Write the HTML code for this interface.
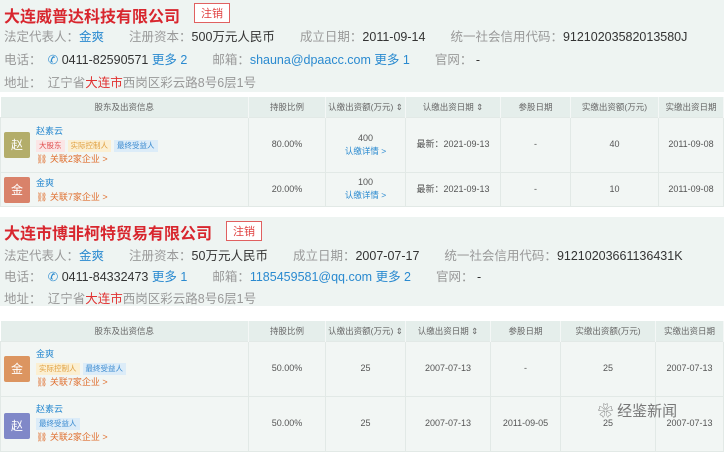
<!DOCTYPE html>
<html><head><meta charset="utf-8"><style>
*{margin:0;padding:0;box-sizing:border-box}
body{width:724px;height:444px;overflow:hidden;background:#fff;font-family:"Liberation Sans","Noto Sans CJK SC",sans-serif;position:relative;color:#444}
.a{position:absolute;white-space:nowrap}
.sec{position:absolute;left:0;width:724px;background:#eef4f2}
.t{font-size:16px;font-weight:bold;color:#d8262e}
.tag{border:1px solid #e06060;color:#e04040;font-size:11px;padding:1px 6px;background:#fff}
.l{font-size:12.5px;color:#999}
.v{color:#333}
.b{color:#2a8ad0}
.r{color:#e03030}
table{position:absolute;left:0;width:724px;border-collapse:collapse;font-size:9px;color:#555;table-layout:fixed}
th{background:#e5eeeb;font-weight:normal;color:#666;height:20px;border-right:1px solid #f4f7f6;white-space:nowrap;overflow:hidden;font-size:8.5px;padding:0}
td{background:#f2f6f4;border:1px solid #e2e9e6;text-align:center;position:relative;white-space:nowrap;padding:0;line-height:13px}
.av{position:absolute;left:3px;width:26px;height:26px;color:#fff;font-size:12px;line-height:26px;text-align:center;border-radius:2px}
.info{position:absolute;left:35px;text-align:left;line-height:14px}
.nm{color:#2a8ad0}
.tg{display:inline-block;font-size:7.5px;padding:0 3px;margin-right:3px;line-height:12px}
.rel{color:#e07030}
.sub{color:#2a8ad0;font-size:8.5px}
</style></head><body>
<div class="sec" style="top:0;height:92px"></div>
<div class="a t" style="left:4px;top:3px">大连威普达科技有限公司</div>
<div class="a tag" style="left:194px;top:3px">注销</div>
<div class="a l" style="left:4px;top:26px">法定代表人：<span class="b">金爽</span>　　注册资本：<span class="v">500万元人民币</span>　　成立日期：<span class="v">2011-09-14</span>　　统一社会信用代码：<span class="v">91210203582013580J</span></div>
<div class="a l" style="left:4px;top:49px">电话：　<span class="b">✆ </span><span class="v">0411-82590571</span> <span class="b">更多 2</span>　　邮箱：<span class="b">shauna@dpaacc.com 更多 1</span>　　官网：<span class="v"> -</span></div>
<div class="a l" style="left:4px;top:72px">地址：　辽宁省<span class="r">大连市</span>西岗区彩云路8号6层1号</div>

<table style="top:97px">
<colgroup><col style="width:248px"><col style="width:77px"><col style="width:80px"><col style="width:95px"><col style="width:70px"><col style="width:88px"><col></colgroup>
<tr><th>股东及出资信息</th><th>持股比例</th><th>认缴出资额(万元) ⇕</th><th>认缴出资日期 ⇕</th><th>参股日期</th><th>实缴出资额(万元)</th><th>实缴出资日期</th></tr>
<tr style="height:55px"><td><div class="av" style="top:14px;background:#b3ad6a">赵</div><div class="info" style="top:6px"><div class="nm">赵素云</div><div><span class="tg" style="background:#fbe6e6;color:#e05050">大股东</span><span class="tg" style="background:#fbefd2;color:#e0a040">实际控制人</span><span class="tg" style="background:#dcecf8;color:#3a8ad0">最终受益人</span></div><div class="rel">⛓ 关联2家企业 &gt;</div></div></td><td>80.00%</td><td>400<br><span class="sub">认缴详情 &gt;</span></td><td>最新：2021-09-13</td><td>-</td><td>40</td><td>2011-09-08</td></tr>
<tr style="height:34px"><td><div class="av" style="top:4px;background:#d9826a">金</div><div class="info" style="top:3px"><div class="nm">金爽</div><div class="rel">⛓ 关联7家企业 &gt;</div></div></td><td>20.00%</td><td>100<br><span class="sub">认缴详情 &gt;</span></td><td>最新：2021-09-13</td><td>-</td><td>10</td><td>2011-09-08</td></tr>
</table>

<div class="sec" style="top:217px;height:89px"></div>
<div class="a t" style="left:4px;top:220px">大连市博非柯特贸易有限公司</div>
<div class="a tag" style="left:226px;top:221px">注销</div>
<div class="a l" style="left:4px;top:245px">法定代表人：<span class="b">金爽</span>　　注册资本：<span class="v">50万元人民币</span>　　成立日期：<span class="v">2007-07-17</span>　　统一社会信用代码：<span class="v">91210203661136431K</span></div>
<div class="a l" style="left:4px;top:266px">电话：　<span class="b">✆ </span><span class="v">0411-84332473</span> <span class="b">更多 1</span>　　邮箱：<span class="b">1185459581@qq.com 更多 2</span>　　官网：<span class="v"> -</span></div>
<div class="a l" style="left:4px;top:288px">地址：　辽宁省<span class="r">大连市</span>西岗区彩云路8号6层1号</div>

<table style="top:321px">
<colgroup><col style="width:248px"><col style="width:77px"><col style="width:80px"><col style="width:85px"><col style="width:70px"><col style="width:95px"><col></colgroup>
<tr><th>股东及出资信息</th><th>持股比例</th><th>认缴出资额(万元) ⇕</th><th>认缴出资日期 ⇕</th><th>参股日期</th><th>实缴出资额(万元)</th><th>实缴出资日期</th></tr>
<tr style="height:55px"><td><div class="av" style="top:14px;background:#dc9560">金</div><div class="info" style="top:5px"><div class="nm">金爽</div><div><span class="tg" style="background:#fbefd2;color:#e0a040">实际控制人</span><span class="tg" style="background:#dcecf8;color:#3a8ad0">最终受益人</span></div><div class="rel">⛓ 关联7家企业 &gt;</div></div></td><td>50.00%</td><td>25</td><td>2007-07-13</td><td>-</td><td>25</td><td>2007-07-13</td></tr>
<tr style="height:55px"><td><div class="av" style="top:16px;background:#8088c8">赵</div><div class="info" style="top:5px"><div class="nm">赵素云</div><div><span class="tg" style="background:#dcecf8;color:#3a8ad0">最终受益人</span></div><div class="rel">⛓ 关联2家企业 &gt;</div></div></td><td>50.00%</td><td>25</td><td>2007-07-13</td><td>2011-09-05</td><td>25</td><td>2007-07-13</td></tr>
</table>
<div class="a" style="left:598px;top:400px;font-size:15px;color:#777">❀ 经鉴新闻</div>
</body></html>
